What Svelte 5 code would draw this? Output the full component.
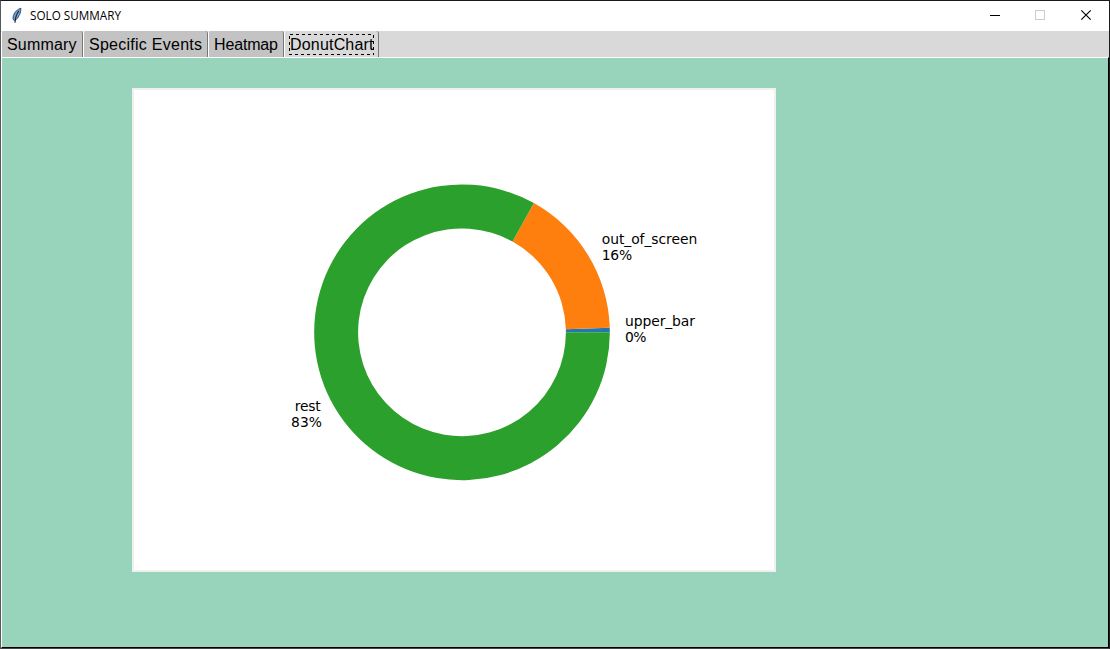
<script>
  const tabs = [
    { label: 'Summary', width: 82, text: 69.5 },
    { label: 'Specific Events', width: 125, text: 113 },
    { label: 'Heatmap', width: 76, text: 64 },
    { label: 'DonutChart', width: 95, text: 83.5 }
  ];
  let active = $state('DonutChart');

  const cx = 328, cy = 242.3, outer = 147.84, inner = 103.9;
  const slices = [
    { from: 0, to: 1.75, color: '#1f77b4' },
    { from: 1.75, to: 60.9, color: '#ff7f0e' },
    { from: 60.9, to: 360, color: '#2ca02c' }
  ];
  const lines = [
    { x: 491, y: 236, text: 'upper_bar', anchor: 'start', width: 70 },
    { x: 491, y: 252, text: '0%', anchor: 'start', width: 21.5 },
    { x: 467.7, y: 154, text: 'out_of_screen', anchor: 'start', width: 95.5 },
    { x: 467.7, y: 170, text: '16%', anchor: 'start', width: 30.5 },
    { x: 186.800, y: 321, text: 'rest', anchor: 'end', width: 26 },
    { x: 188, y: 337, text: '83%', anchor: 'end', width: 31 }
  ];

  function point(r, deg) {
    const a = (deg * Math.PI) / 180;
    return `${(cx + r * Math.cos(a)).toFixed(3)} ${(cy - r * Math.sin(a)).toFixed(3)}`;
  }

  function arc(s) {
    const large = s.to - s.from > 180 ? 1 : 0;
    return `M${point(outer, s.from)}A${outer} ${outer} 0 ${large} 0 ${point(outer, s.to)}` +
      `L${point(inner, s.to)}A${inner} ${inner} 0 ${large} 1 ${point(inner, s.from)}Z`;
  }
</script>

<div class="window">
  <header>
    <svg class="feather" width="12" height="18" viewBox="0 0 12 18">
      <path d="M9.900 1.200C6.500 2.200 3.500 5 2.400 8.500L1.900 12 3.500 13.800C6.300 12.200 7.300 10.200 8 8.600 8.800 7.300 9.800 5.500 9.900 1.200Z" fill="#6ba0df" stroke="#26313f" stroke-width=".8" />
      <path d="M7.800 4C5.500 7 4.200 10 4 15.800" fill="none" stroke="#17202c" stroke-width="1.100" />
    </svg>
    <svg class="title" width="94" height="30">
      <text x="0" y="19" textLength="91" lengthAdjust="spacingAndGlyphs">SOLO SUMMARY</text>
    </svg>
    <div class="controls">
      <svg width="46" height="30" shape-rendering="crispEdges"><path d="M18 14.500h10" stroke="#000" /></svg>
      <svg width="46" height="30" shape-rendering="crispEdges"><path d="M17.500 9.500h9v9h-9z" fill="none" stroke="#ccc" /></svg>
      <svg width="46" height="30"><path d="M17.300 9.300l9.400 9.400M26.700 9.300l-9.400 9.400" stroke="#000" stroke-width="1.150" /></svg>
    </div>
  </header>

  <nav>
    {#each tabs as tab}
      <button class:active={active === tab.label} style="width:{tab.width}px" onclick={() => (active = tab.label)}>
        <svg width={tab.width - 2} height="26">
          {#if active === tab.label}
            <rect x="4.500" y="3.500" width="84" height="20" fill="none" stroke="#000" stroke-dasharray="3 3" shape-rendering="crispEdges" />
          {/if}
          <text x="5" y="19" textLength={tab.text}>{tab.label}</text>
        </svg>
      </button>
    {/each}
  </nav>

  <main>
    <div class="figure">
      <svg width="640" height="480" viewBox="0 0 640 480">
        {#each slices as slice}
          <path d={arc(slice)} fill={slice.color} />
        {/each}
        {#each lines as l}
          <text x={l.x} y={l.y} text-anchor={l.anchor} textLength={l.width}>{l.text}</text>
        {/each}
      </svg>
    </div>
  </main>
</div>

<style>
  :global(body) {
    margin: 0;
    overflow: hidden;
  }
  svg {
    display: block;
  }
  .window {
    box-sizing: border-box;
    width: 1110px;
    height: 649px;
    display: flex;
    flex-direction: column;
    border: 1px solid #1a181b;
    border-left-color: #555b5c;
    border-bottom-color: #454348;
    border-right-color: #1d1d1e;
    background: #fff;
  }
  header {
    height: 30px;
    flex: none;
    display: flex;
    align-items: flex-start;
    padding-left: 10px;
    background: #fff;
  }
  .feather {
    margin-top: 6px;
  }
  .title {
    margin-left: 7px;
  }
  .title text {
    font: 12px "Open Sans", "Noto Sans", sans-serif;
  }
  .controls {
    display: flex;
    margin-left: auto;
    margin-right: -1px;
  }
  nav {
    height: 26px;
    flex: none;
    display: flex;
    background: #d9d9d9;
  }
  button {
    box-sizing: border-box;
    height: 26px;
    padding: 0;
    border: solid #fff;
    border-width: 0 0 0 1px;
    border-right: 1px solid #777;
    border-top-left-radius: 2px;
    border-top-right-radius: 3px;
    background: #c3c3c3;
  }
  button.active {
    background: #d9d9d9;
  }
  button text {
    font: 16px "Liberation Sans", Arial, sans-serif;
  }
  main {
    flex: 1;
    box-sizing: border-box;
    border-top: 1px solid #fff;
    border-left: 1px solid #fff;
    border-right: 1px solid #000;
    border-bottom: 1px solid #000;
    padding: 30px 0 0 130px;
    background: #98d4bb;
  }
  .figure {
    width: 640px;
    height: 480px;
    border: 2px solid #f0f0f0;
    background: #fff;
  }
  .figure text {
    font: 13.89px "DejaVu Sans", sans-serif;
  }
</style>
